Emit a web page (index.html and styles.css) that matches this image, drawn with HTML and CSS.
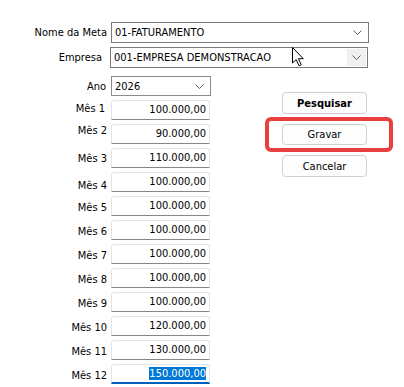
FILE: index.html
```html
<!DOCTYPE html>
<html>
<head>
<meta charset="utf-8">
<title>Metas</title>
<link rel="stylesheet" href="styles.css">
</head>
<body>
<div class="form">

  <div class="row">
    <label class="lbl">Nome da Meta</label>
    <div class="combo wide">
      <span>01-FATURAMENTO</span>
      <span class="drop"><svg width="9" height="5" viewBox="0 0 9 5"><polyline points="0.5,0.5 4.5,4.5 8.5,0.5" fill="none" stroke="#606060" stroke-width="1"/></svg></span>
    </div>
  </div>

  <div class="row row-empresa">
    <label class="lbl lbl-empresa">Empresa</label>
    <div class="combo wide">
      <span>001-EMPRESA DEMONSTRACAO</span>
      <span class="drop hot"><svg width="9" height="5" viewBox="0 0 9 5"><polyline points="0.5,0.5 4.5,4.5 8.5,0.5" fill="none" stroke="#606060" stroke-width="1"/></svg></span>
    </div>
  </div>

  <div class="body">
    <div class="months">
      <div class="row">
        <label class="lbl lbl-ano">Ano</label>
        <div class="combo small">
          <span>2026</span>
          <span class="drop"><svg width="9" height="5" viewBox="0 0 9 5"><polyline points="0.5,0.5 4.5,4.5 8.5,0.5" fill="none" stroke="#606060" stroke-width="1"/></svg></span>
        </div>
      </div>
      <div class="row mes"><label class="lbl up1">Mês 1</label><div class="edit">100.000,00</div></div>
      <div class="row mes"><label class="lbl up3">Mês 2</label><div class="edit">90.000,00</div></div>
      <div class="row mes"><label class="lbl dn1">Mês 3</label><div class="edit">110.000,00</div></div>
      <div class="row mes"><label class="lbl dn4">Mês 4</label><div class="edit">100.000,00</div></div>
      <div class="row mes"><label class="lbl">Mês 5</label><div class="edit">100.000,00</div></div>
      <div class="row mes"><label class="lbl">Mês 6</label><div class="edit">100.000,00</div></div>
      <div class="row mes"><label class="lbl">Mês 7</label><div class="edit">100.000,00</div></div>
      <div class="row mes"><label class="lbl">Mês 8</label><div class="edit">100.000,00</div></div>
      <div class="row mes"><label class="lbl">Mês 9</label><div class="edit">100.000,00</div></div>
      <div class="row mes"><label class="lbl">Mês 10</label><div class="edit">120.000,00</div></div>
      <div class="row mes"><label class="lbl">Mês 11</label><div class="edit">130.000,00</div></div>
      <div class="row mes"><label class="lbl">Mês 12</label><div class="edit focus"><span class="sel">150.000,00</span></div></div>
    </div>

    <div class="actions">
      <button class="btn bold">Pesquisar</button>
      <div class="mark">
        <button class="btn">Gravar</button>
      </div>
      <button class="btn">Cancelar</button>
    </div>
  </div>

</div>

<svg class="cursor" width="13" height="20" viewBox="0 0 13 20">
  <path d="M0.5,0.5 L0.5,16 L4.2,12.6 L7,18.8 L9.2,17.8 L6.5,11.7 L11.3,11.7 Z" fill="#fff" stroke="#000" stroke-width="1" stroke-linejoin="miter"/>
</svg>
</body>
</html>
```

FILE: styles.css
```css
body {
  margin: 0;
  background-color: white;
  font-family: "DejaVu Sans Condensed", "DejaVu Sans", sans-serif;
  font-stretch: condensed;
  font-size: 11px;
  color: #000;
}

.form {
  padding-top: 22px;
}

.row {
  display: flex;
  align-items: center;
  margin-bottom: 2px;
}

.row-empresa {
  margin-bottom: 8px;
}

.lbl {
  width: 107px;
  flex: none;
  text-align: right;
  margin-right: 4px;
}

.lbl-empresa {
  width: 102px;
  margin-right: 8px;
}

.lbl-ano {
  width: 106px;
  margin-right: 5px;
}

/* combo boxes */
.combo {
  box-sizing: border-box;
  height: 21px;
  border: 1px solid #7a7a7a;
  background: #fff;
  display: flex;
  align-items: center;
  padding-left: 3px;
}

.combo span:first-child {
  flex: 1;
}

.combo.wide {
  width: 258px;
}

.combo.small {
  width: 100px;
  height: 20px;
  border-color: #8c8c8c;
}

.drop {
  width: 19px;
  align-self: stretch;
  display: flex;
  align-items: center;
  justify-content: center;
  margin: 1px 1px 1px 0;
}

.drop.hot {
  background: #f0f0f0;
}

/* month rows */
.months {
  width: 212px;
}

.mes {
  align-items: flex-start;
  margin-bottom: 4px;
}

.row:first-child {
  margin-bottom: 4px;
}

.mes .lbl {
  line-height: 13px;
  padding-top: 5px;
}

.mes .lbl.up1 { padding-top: 2px; width: 105px; margin-right: 6px; }
.mes .lbl.up3 { padding-top: 0; }
.mes .lbl.dn1 { padding-top: 4px; }
.mes .lbl.dn4 { padding-top: 7px; }

.edit {
  box-sizing: border-box;
  width: 99px;
  height: 20px;
  border: 1px solid #e3e3e3;
  border-bottom: 1px solid #868686;
  border-radius: 3px 3px 0 0;
  text-align: right;
  padding-right: 3px;
  line-height: 18px;
  background: #fff;
}

.edit.focus {
  border-bottom: 2px solid #005fb8;
  line-height: 17px;
}

.sel {
  background: #0078d7;
  color: #fff;
}

/* buttons */
.body {
  display: flex;
  align-items: flex-start;
}

.actions {
  margin-left: 70px;
  margin-top: 16px;
  width: 85px;
}

.btn {
  display: block;
  box-sizing: border-box;
  width: 85px;
  height: 22px;
  border: 1px solid #d0d0d0;
  border-radius: 4px;
  background: #fdfdfd;
  font: inherit;
  color: #000;
  padding: 0;
}

.btn.bold {
  font-weight: bold;
}

.mark {
  box-sizing: border-box;
  width: 128px;
  margin: 3px 0 3px -17px;
  border: 4px solid #e8403f;
  border-radius: 6px;
  padding: 3px 22px 3px 13px;
}

.mark .btn {
  height: 21px;
}

.cursor {
  position: absolute;
  left: 292px;
  top: 47px;
}
```
